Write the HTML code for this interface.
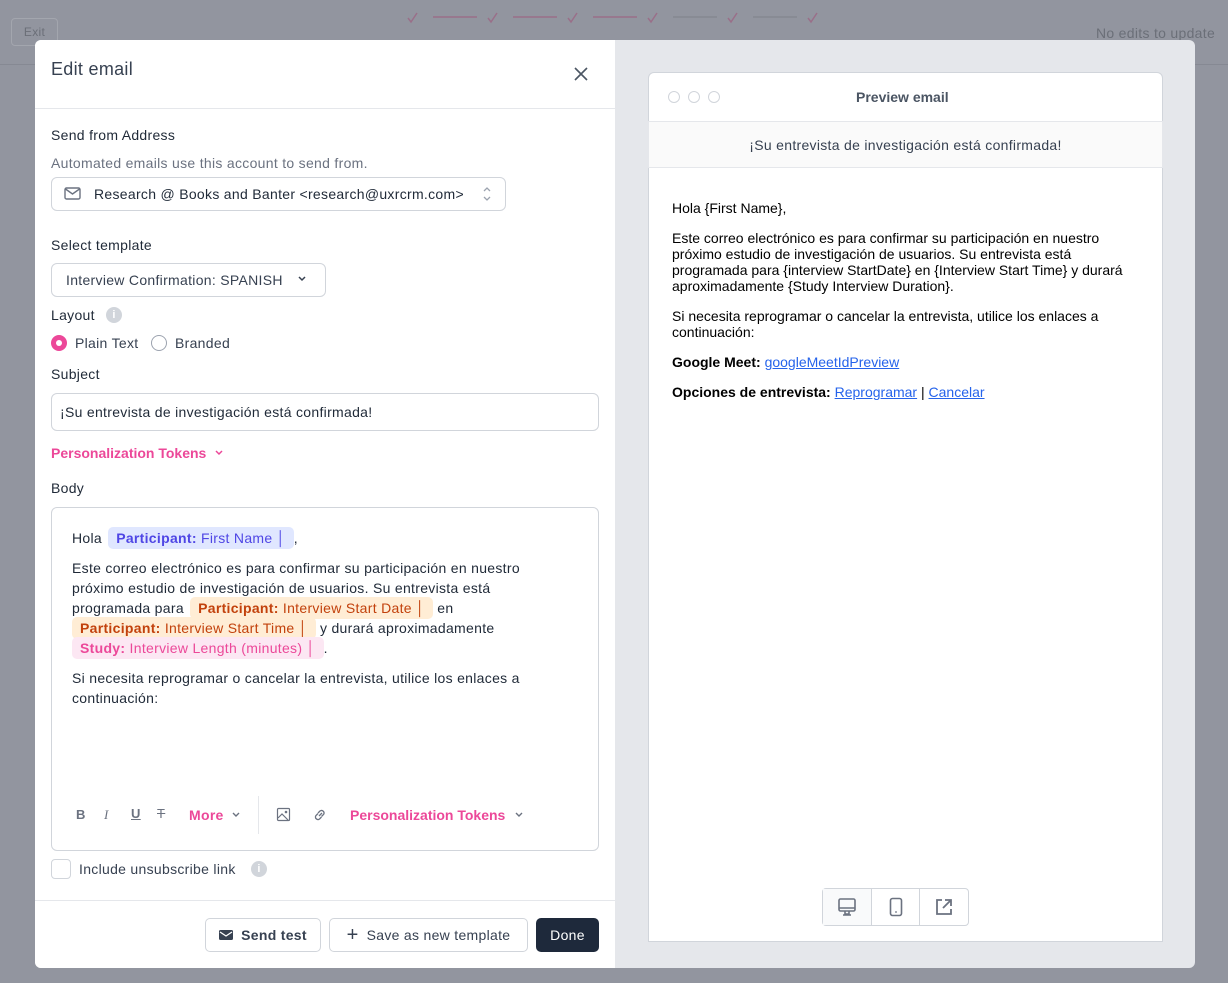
<!DOCTYPE html>
<html><head><meta charset="utf-8">
<style>
*{box-sizing:border-box;margin:0;padding:0}
body{width:1228px;height:983px;background:#92959f;font-family:"Liberation Sans",Arial,sans-serif;position:relative;overflow:hidden;color:#1f2937;letter-spacing:.3px}
.a{position:absolute}
.t{font-size:14px;color:#1f2937;white-space:nowrap}
.lab{font-size:14px;color:#1f2937}
.box{border:1px solid #d1d5db;border-radius:6px;background:#fff}
.pink{color:#ec4899}
.tok{border-radius:5px;padding:3px 8px;}
.btn{border:1px solid #d1d5db;border-radius:5px;background:#fff;font-size:14px;color:#374151;display:flex;align-items:center;justify-content:center;gap:8px}
.pv{font-size:14px;color:#000;line-height:16px;letter-spacing:0}
.pv a{color:#2563eb;text-decoration:underline}
.bl div{white-space:nowrap;height:20px}
</style></head><body>
<div class="a" style="left:11px;top:18px;width:47px;height:28px;border:1px solid #a3a6ae;border-radius:4px;font-size:12px;color:#6b6f78;text-align:center;line-height:26px">Exit</div>
<div class="a" style="left:0;top:64px;width:1228px;height:1px;background:#868993"></div>
<div class="a" style="left:1096px;top:25px;font-size:14px;color:#6b6f78">No edits to update</div>
<svg class="a" style="left:405px;top:10px" width="420" height="16">
<g fill="none" stroke="#9a6f89" stroke-width="1.5">
<path d="M3 8l3 4 6-9M83 8l3 4 6-9M163 8l3 4 6-9M243 8l3 4 6-9M323 8l3 4 6-9M403 8l3 4 6-9"/>
<path d="M28 7h44M108 7h44M188 7h44"/></g>
<path d="M268 7h44M348 7h44" stroke="#858891" stroke-width="1.5"/>
</svg>
<div class="a" style="left:35px;top:40px;width:1160px;height:928px;border-radius:6px;overflow:hidden;background:#e5e7eb">
<div class="a" style="left:0;top:0;width:580px;height:928px;background:#fff"></div>
</div>
<div class="a" style="left:51px;top:59px;font-size:18px;color:#374151">Edit email</div>
<svg class="a" style="left:573px;top:66px" width="16" height="16"><path d="M2 2l12 12M14 2L2 14" stroke="#4b5563" stroke-width="1.6"/></svg>
<div class="a" style="left:35px;top:108px;width:580px;height:1px;background:#e5e7eb"></div>
<div class="a lab" style="left:51px;top:127px">Send from Address</div>
<div class="a" style="left:51px;top:155px;font-size:14px;color:#6b7280">Automated emails use this account to send from.</div>
<div class="a box" style="left:51px;top:177px;width:455px;height:34px"></div>
<svg class="a" style="left:64px;top:187px" width="18" height="14"><rect x="1" y="1" width="15" height="11" rx="1.5" fill="none" stroke="#6b7280" stroke-width="1.4"/><path d="M1.5 2l7 5 7-5" fill="none" stroke="#6b7280" stroke-width="1.4"/></svg>
<div class="a t" style="left:94px;top:186px">Research @ Books and Banter &lt;research@uxrcrm.com&gt;</div>
<svg class="a" style="left:481px;top:185px" width="12" height="18"><path d="M3 6l3-3 3 3M3 12l3 3 3-3" fill="none" stroke="#9ca3af" stroke-width="1.3"/></svg>
<div class="a lab" style="left:51px;top:237px">Select template</div>
<div class="a box" style="left:51px;top:263px;width:275px;height:34px"></div>
<div class="a t" style="left:66px;top:272px;color:#374151">Interview Confirmation: SPANISH</div>
<svg class="a" style="left:297px;top:275px" width="10" height="8"><path d="M2 2l3 3 3-3" fill="none" stroke="#374151" stroke-width="1.5"/></svg>
<div class="a lab" style="left:51px;top:307px">Layout</div>
<div class="a" style="left:106px;top:307px;width:16px;height:16px;border-radius:50%;background:#d1d5db;color:#fff;font-size:11px;text-align:center;line-height:16px;font-weight:bold">i</div>
<div class="a" style="left:51px;top:335px;width:16px;height:16px;border-radius:50%;background:#ec4899"><div style="margin:5px;width:6px;height:6px;border-radius:50%;background:#fff"></div></div>
<div class="a t" style="left:75px;top:335px;color:#374151">Plain Text</div>
<div class="a" style="left:151px;top:335px;width:16px;height:16px;border-radius:50%;border:1px solid #9ca3af"></div>
<div class="a t" style="left:175px;top:335px;color:#374151">Branded</div>
<div class="a lab" style="left:51px;top:366px">Subject</div>
<div class="a box" style="left:51px;top:393px;width:548px;height:38px"></div>
<div class="a t" style="left:60px;top:404px">¡Su entrevista de investigación está confirmada!</div>
<div class="a pink" style="left:51px;top:445px;font-size:14px;font-weight:bold;letter-spacing:0">Personalization Tokens</div>
<svg class="a" style="left:214px;top:449px" width="10" height="8"><path d="M2 2l3 3 3-3" fill="none" stroke="#ec4899" stroke-width="1.5"/></svg>
<div class="a lab" style="left:51px;top:480px">Body</div>
<div class="a box" style="left:51px;top:507px;width:548px;height:344px"></div>
<div class="a bl" style="left:72px;top:528px;width:510px;font-size:14px;line-height:20px;color:#1f2937">
<div>Hola <span class="tok" style="background:#e0e7ff;color:#4f46e5;margin-left:2px"><b>Participant:</b> First Name │</span>,</div>
<div style="margin-top:10px">Este correo electrónico es para confirmar su participación en nuestro</div>
<div>próximo estudio de investigación de usuarios. Su entrevista está</div>
<div>programada para <span class="tok" style="background:#ffedd5;color:#c2410c;margin-left:2px"><b>Participant:</b> Interview Start Date │</span> en</div>
<div><span class="tok" style="background:#ffedd5;color:#c2410c"><b>Participant:</b> Interview Start Time │</span> y durará aproximadamente</div>
<div><span class="tok" style="background:#fce7f3;color:#ec4899"><b>Study:</b> Interview Length (minutes) │</span>.</div>
<div style="margin-top:10px">Si necesita reprogramar o cancelar la entrevista, utilice los enlaces a</div>
<div>continuación:</div>
</div>
<div class="a" style="left:76px;top:807px;font-size:13px;color:#6b7280;font-weight:bold">B</div>
<div class="a" style="left:104px;top:807px;font-size:13px;color:#6b7280;font-style:italic;font-family:'Liberation Serif',serif">I</div>
<div class="a" style="left:131px;top:806px;font-size:13px;color:#6b7280;text-decoration:underline;font-weight:bold">U</div>
<div class="a" style="left:157px;top:806px;font-size:13px;color:#6b7280;text-decoration:line-through">T</div>
<div class="a pink" style="left:189px;top:807px;font-size:14px;font-weight:bold">More</div>
<svg class="a" style="left:231px;top:811px" width="10" height="8"><path d="M2 2l3 3 3-3" fill="none" stroke="#6b7280" stroke-width="1.4"/></svg>
<div class="a" style="left:258px;top:796px;width:1px;height:38px;background:#e5e7eb"></div>
<svg class="a" style="left:276px;top:807px" width="16" height="16"><rect x="1.5" y="1.5" width="12" height="12" rx="1" fill="none" stroke="#6b7280" stroke-width="1.2"/><circle cx="10" cy="5" r="1.3" fill="#6b7280"/><path d="M2 11l4-4 6 6" fill="none" stroke="#6b7280" stroke-width="1.2"/></svg>
<svg class="a" style="left:312px;top:807px" width="16" height="16"><path d="M7 9l3-3M6 6l2-2a2.5 2.5 0 013.5 3.5l-2 2M9.5 10l-2 2A2.5 2.5 0 014 8.5l2-2" fill="none" stroke="#6b7280" stroke-width="1.3"/></svg>
<div class="a pink" style="left:350px;top:807px;font-size:14px;font-weight:bold;letter-spacing:0">Personalization Tokens</div>
<svg class="a" style="left:514px;top:811px" width="10" height="8"><path d="M2 2l3 3 3-3" fill="none" stroke="#6b7280" stroke-width="1.4"/></svg>
<div class="a" style="left:51px;top:859px;width:20px;height:20px;border:1px solid #d1d5db;border-radius:4px"></div>
<div class="a t" style="left:79px;top:861px;color:#374151">Include unsubscribe link</div>
<div class="a" style="left:251px;top:861px;width:16px;height:16px;border-radius:50%;background:#d1d5db;color:#fff;font-size:11px;text-align:center;line-height:16px;font-weight:bold">i</div>
<div class="a" style="left:35px;top:900px;width:580px;height:1px;background:#e5e7eb"></div>
<div class="a btn" style="left:205px;top:918px;width:116px;height:34px;font-weight:bold"><svg width="14" height="12"><rect x="0" y="1" width="14" height="10" rx="1.5" fill="#374151"/><path d="M1 3l6 4 6-4" fill="none" stroke="#fff" stroke-width="1.3"/></svg>Send test</div>
<div class="a btn" style="left:329px;top:918px;width:199px;height:34px"><span style="font-size:20px;font-weight:300">+</span>Save as new template</div>
<div class="a" style="left:536px;top:918px;width:63px;height:34px;border-radius:5px;background:#1e293b;color:#fff;font-size:14px;text-align:center;line-height:34px">Done</div>
<div class="a" style="left:648px;top:72px;width:515px;height:870px;background:#fff;border:1px solid #d1d5db;border-radius:6px 6px 0 0"></div>
<div class="a" style="left:668px;top:91px;width:12px;height:12px;border-radius:50%;border:1px solid #d1d5db"></div>
<div class="a" style="left:688px;top:91px;width:12px;height:12px;border-radius:50%;border:1px solid #d1d5db"></div>
<div class="a" style="left:708px;top:91px;width:12px;height:12px;border-radius:50%;border:1px solid #d1d5db"></div>
<div class="a" style="left:856px;top:89px;font-size:14px;color:#4b5563;font-weight:bold;letter-spacing:0">Preview email</div>
<div class="a" style="left:648px;top:121px;width:515px;height:47px;background:#fafafa;border:1px solid #e5e7eb"></div>
<div class="a" style="left:648px;top:137px;width:515px;text-align:center;font-size:14px;color:#374151">¡Su entrevista de investigación está confirmada!</div>
<div class="a pv" style="left:672px;top:200px;width:460px">
<div>Hola {First Name},</div>
<div style="margin-top:14px">Este correo electrónico es para confirmar su participación en nuestro próximo estudio de investigación de usuarios. Su entrevista está programada para {interview StartDate} en {Interview Start Time} y durará aproximadamente {Study Interview Duration}.</div>
<div style="margin-top:14px">Si necesita reprogramar o cancelar la entrevista, utilice los enlaces a continuación:</div>
<div style="margin-top:14px"><b>Google Meet:</b> <a>googleMeetIdPreview</a></div>
<div style="margin-top:14px"><b>Opciones de entrevista:</b> <a>Reprogramar</a> | <a>Cancelar</a></div>
</div>
<div class="a" style="left:822px;top:888px;width:147px;height:38px;border:1px solid #d1d5db;border-radius:4px;display:flex">
<div style="width:49px;border-right:1px solid #d1d5db;background:#f9fafb;display:flex;align-items:center;justify-content:center"><svg width="20" height="20"><rect x="2" y="2" width="16" height="12" rx="1.5" fill="none" stroke="#6b7280" stroke-width="1.6"/><path d="M2 11h16M8 14v3h4v-3M6 18h8" fill="none" stroke="#6b7280" stroke-width="1.6"/></svg></div>
<div style="width:48px;border-right:1px solid #d1d5db;display:flex;align-items:center;justify-content:center"><svg width="14" height="20"><rect x="1.5" y="1.5" width="11" height="17" rx="2" fill="none" stroke="#6b7280" stroke-width="1.6"/><circle cx="7" cy="15" r="0.9" fill="#6b7280"/></svg></div>
<div style="flex:1;display:flex;align-items:center;justify-content:center"><svg width="20" height="20"><path d="M8 3H3v14h14v-5" fill="none" stroke="#6b7280" stroke-width="1.8"/><path d="M9 11l8-8M11 3h6v6" fill="none" stroke="#6b7280" stroke-width="1.8"/></svg></div>
</div>
</body></html>
